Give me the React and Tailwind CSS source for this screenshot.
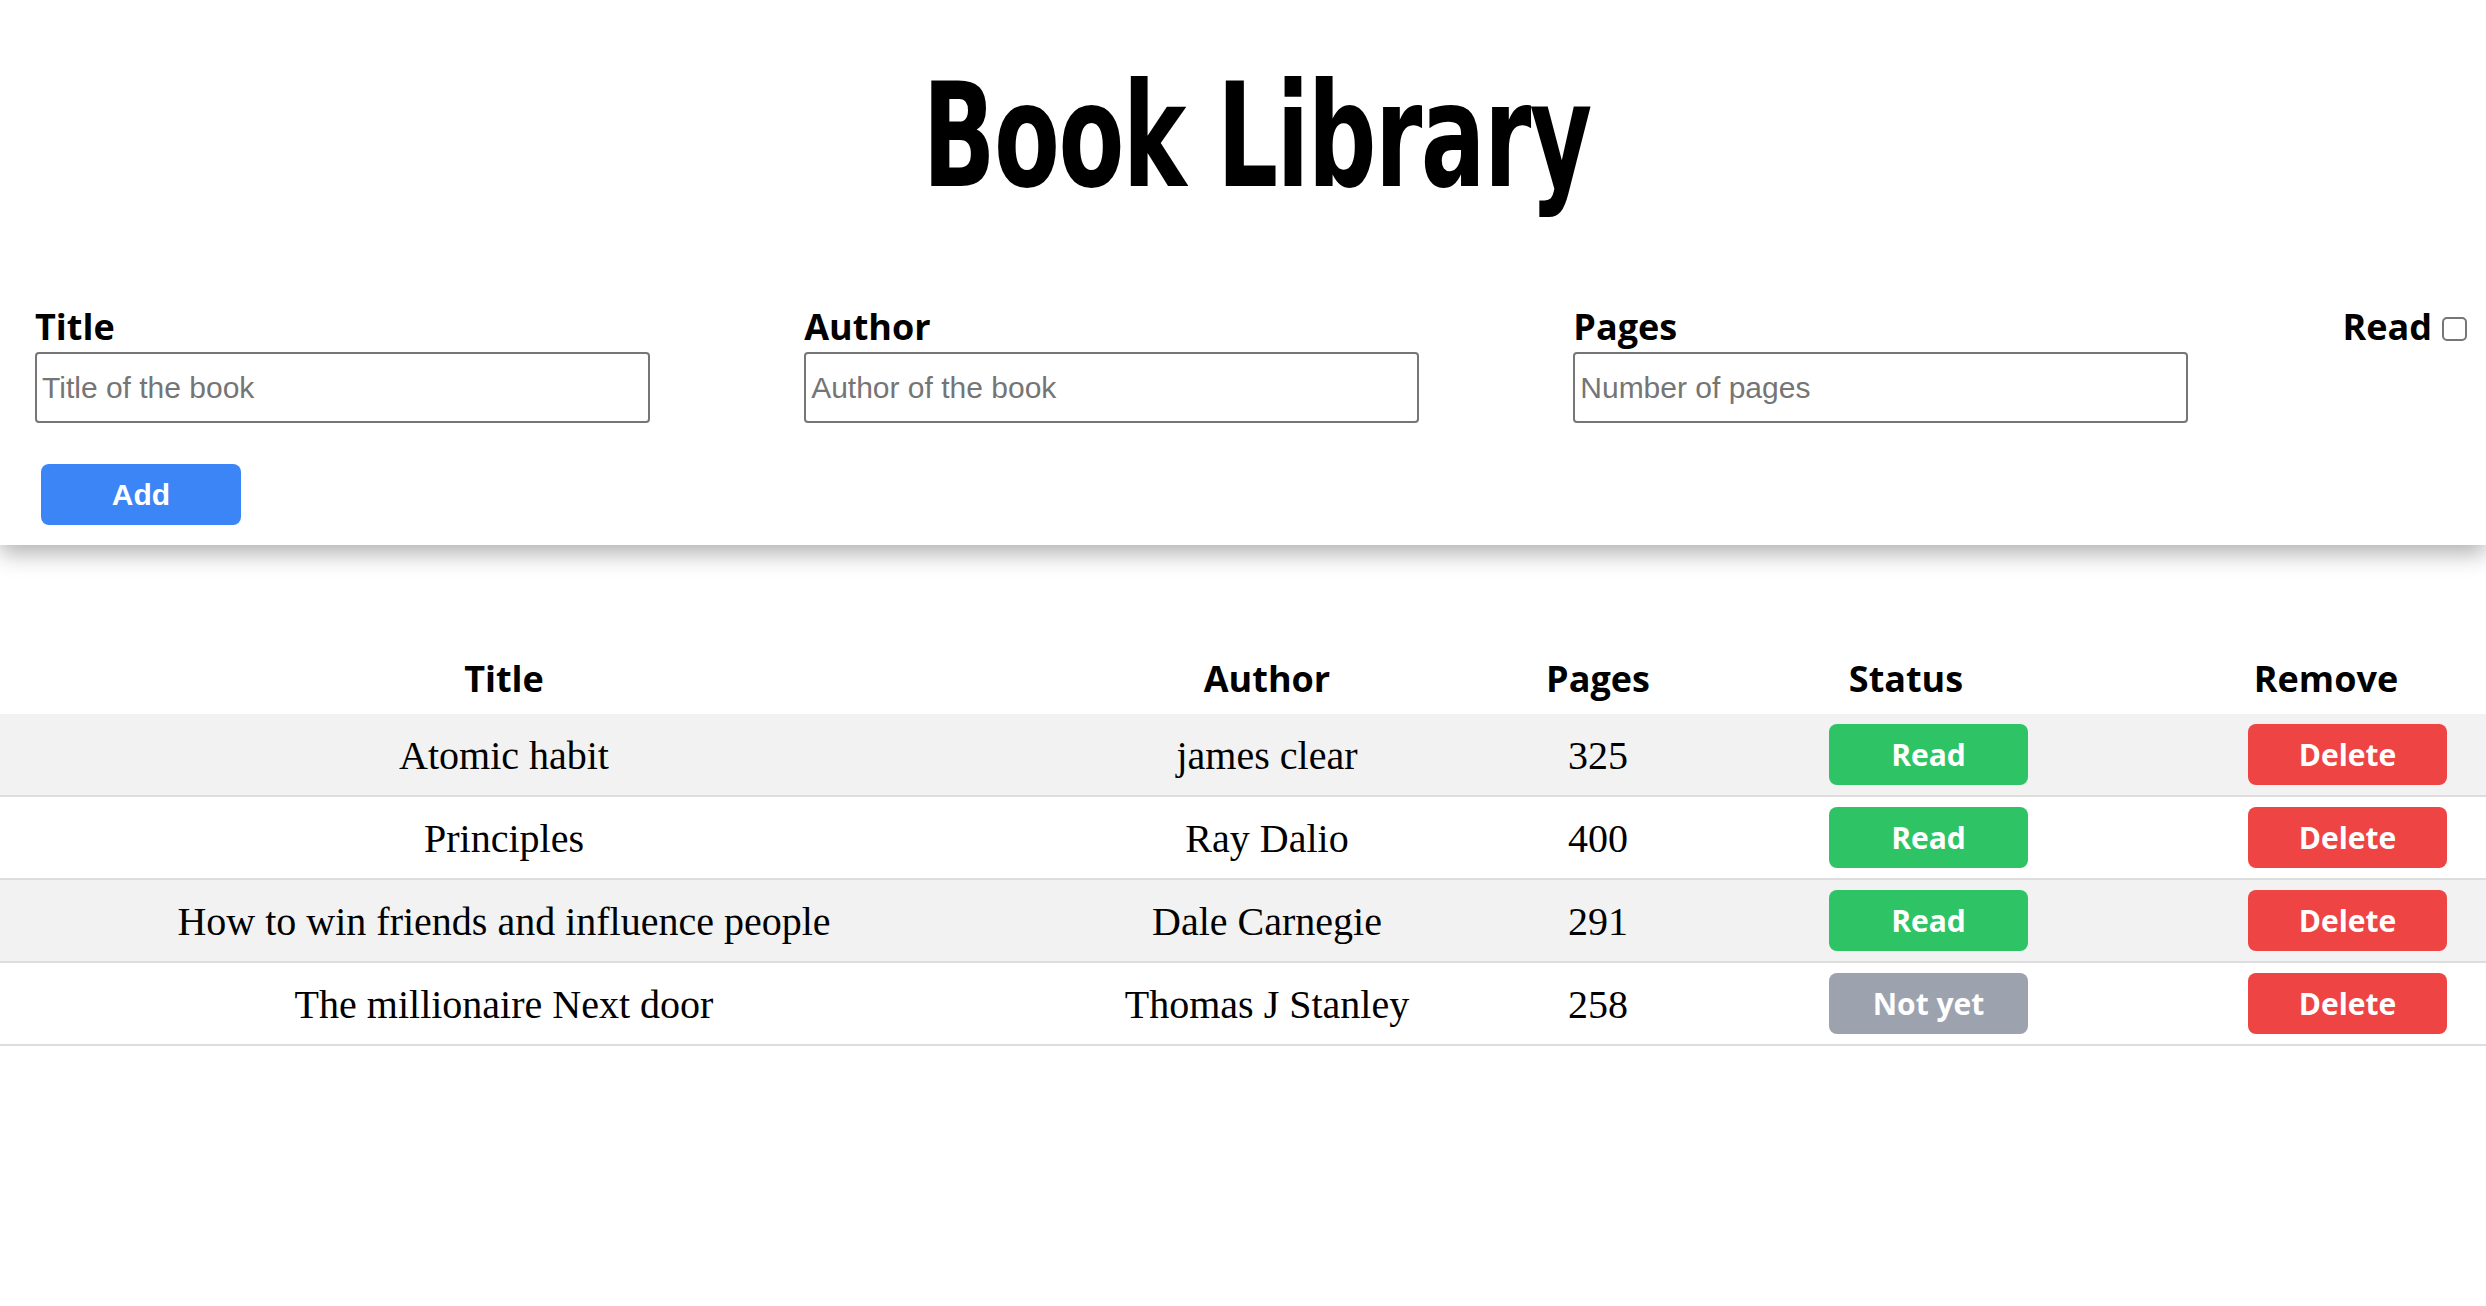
import React, { useState } from 'react';

const initialBooks = [
    { title: "Atomic habit", author: "james clear", pages: 325, read: true },
    { title: "Principles", author: "Ray Dalio", pages: 400, read: true },
    { title: "How to win friends and influence people", author: "Dale Carnegie", pages: 291, read: true },
    { title: "The millionaire Next door", author: "Thomas J Stanley", pages: 258, read: false },
];

const labelFont = "font-['Open_Sans','DejaVu_Sans',sans-serif]";
const serifFont = "font-['Liberation_Serif','DejaVu_Serif',serif]";

const Field = ({ label, placeholder }) => (
    <div className="flex flex-col w-[615px]">
        <label className={`${labelFont} font-bold text-[36px] leading-[36px] text-black`}>{label}</label>
        <input
            type="text"
            placeholder={placeholder}
            className="mt-[7px] h-[71px] w-full border-2 border-[#767676] rounded-[4px] pl-[5px] font-['Liberation_Sans',Arial,sans-serif] text-[30px] text-black placeholder:text-[#757575] outline-none"
        />
    </div>
);

const App = () => {
    const [books, setBooks] = useState(initialBooks);

    const remove = (i) => setBooks(books.filter((_, idx) => idx !== i));

    return (
        <div className="min-h-screen bg-white">
            {/* Form section */}
            <div className="relative z-10 bg-white shadow-[0_8px_22px_rgba(0,0,0,0.32)] pb-[20px]">
                <header className="pt-[64px] flex justify-center">
                    <h1 className="pl-[28px] font-['DejaVu_Sans_Condensed','DejaVu_Sans',sans-serif] font-bold text-[144px] leading-[144px] text-black">
                        <span className="inline-block scale-x-[0.74] tracking-[-2px]">Book Library</span>
                    </h1>
                </header>

                <form className="mt-[101px]" onSubmit={(e) => e.preventDefault()}>
                    <div className="flex justify-between items-start pl-[35px] pr-[19px]">
                        <Field label="Title" placeholder="Title of the book" />
                        <Field label="Author" placeholder="Author of the book" />
                        <Field label="Pages" placeholder="Number of pages" />
                        <div className="flex items-end gap-[10px]">
                            <label className={`${labelFont} font-bold text-[36px] leading-[36px] text-black`}>Read</label>
                            <input
                                type="checkbox"
                                className="appearance-none w-[25px] h-[24px] mb-[4px] border-2 border-[#767676] rounded-[5px] bg-white"
                            />
                        </div>
                    </div>
                    <button
                        type="submit"
                        className="mt-[41px] ml-[41px] w-[200px] h-[61px] rounded-[8px] bg-[#3b85f6] text-white font-['Liberation_Sans',Arial,sans-serif] font-bold text-[30px]"
                    >
                        Add
                    </button>
                </form>
            </div>

            {/* Table */}
            <div className="mt-[116px]">
                <div className={`grid grid-cols-[1008px_518px_144px_472px_1fr] ${labelFont} font-bold text-[36px] leading-[36px] text-black pb-[17px]`}>
                    <div className="text-center">Title</div>
                    <div className="text-center">Author</div>
                    <div className="text-center">Pages</div>
                    <div className="text-center">Status</div>
                    <div className="text-center pl-[24px]">Remove</div>
                </div>

                {books.map((book, i) => (
                    <div
                        key={i}
                        className={`grid grid-cols-[1008px_518px_144px_472px_1fr] h-[83px] border-b-2 border-[#dddddd] items-center ${i % 2 === 0 ? 'bg-[#f2f2f2]' : 'bg-white'}`}
                    >
                        <div className={`${serifFont} text-[40px] text-black text-center pt-[3px]`}>{book.title}</div>
                        <div className={`${serifFont} text-[40px] text-black text-center pt-[3px]`}>{book.author}</div>
                        <div className={`${serifFont} text-[40px] text-black text-center pt-[3px]`}>{book.pages}</div>
                        <div className="pl-[159px] flex">
                            <button
                                onClick={() => setBooks(books.map((b, idx) => idx === i ? { ...b, read: !b.read } : b))}
                                className={`w-[199px] h-[61px] rounded-[8px] text-white ${labelFont} font-bold text-[30px] ${book.read ? 'bg-[#2ec466]' : 'bg-[#9ca3af]'}`}
                            >
                                {book.read ? 'Read' : 'Not yet'}
                            </button>
                        </div>
                        <div className="pl-[106px] flex">
                            <button
                                onClick={() => remove(i)}
                                className={`w-[199px] h-[61px] rounded-[8px] text-white bg-[#ef4444] ${labelFont} font-bold text-[30px]`}
                            >
                                Delete
                            </button>
                        </div>
                    </div>
                ))}
            </div>
        </div>
    );
};

export default App;
